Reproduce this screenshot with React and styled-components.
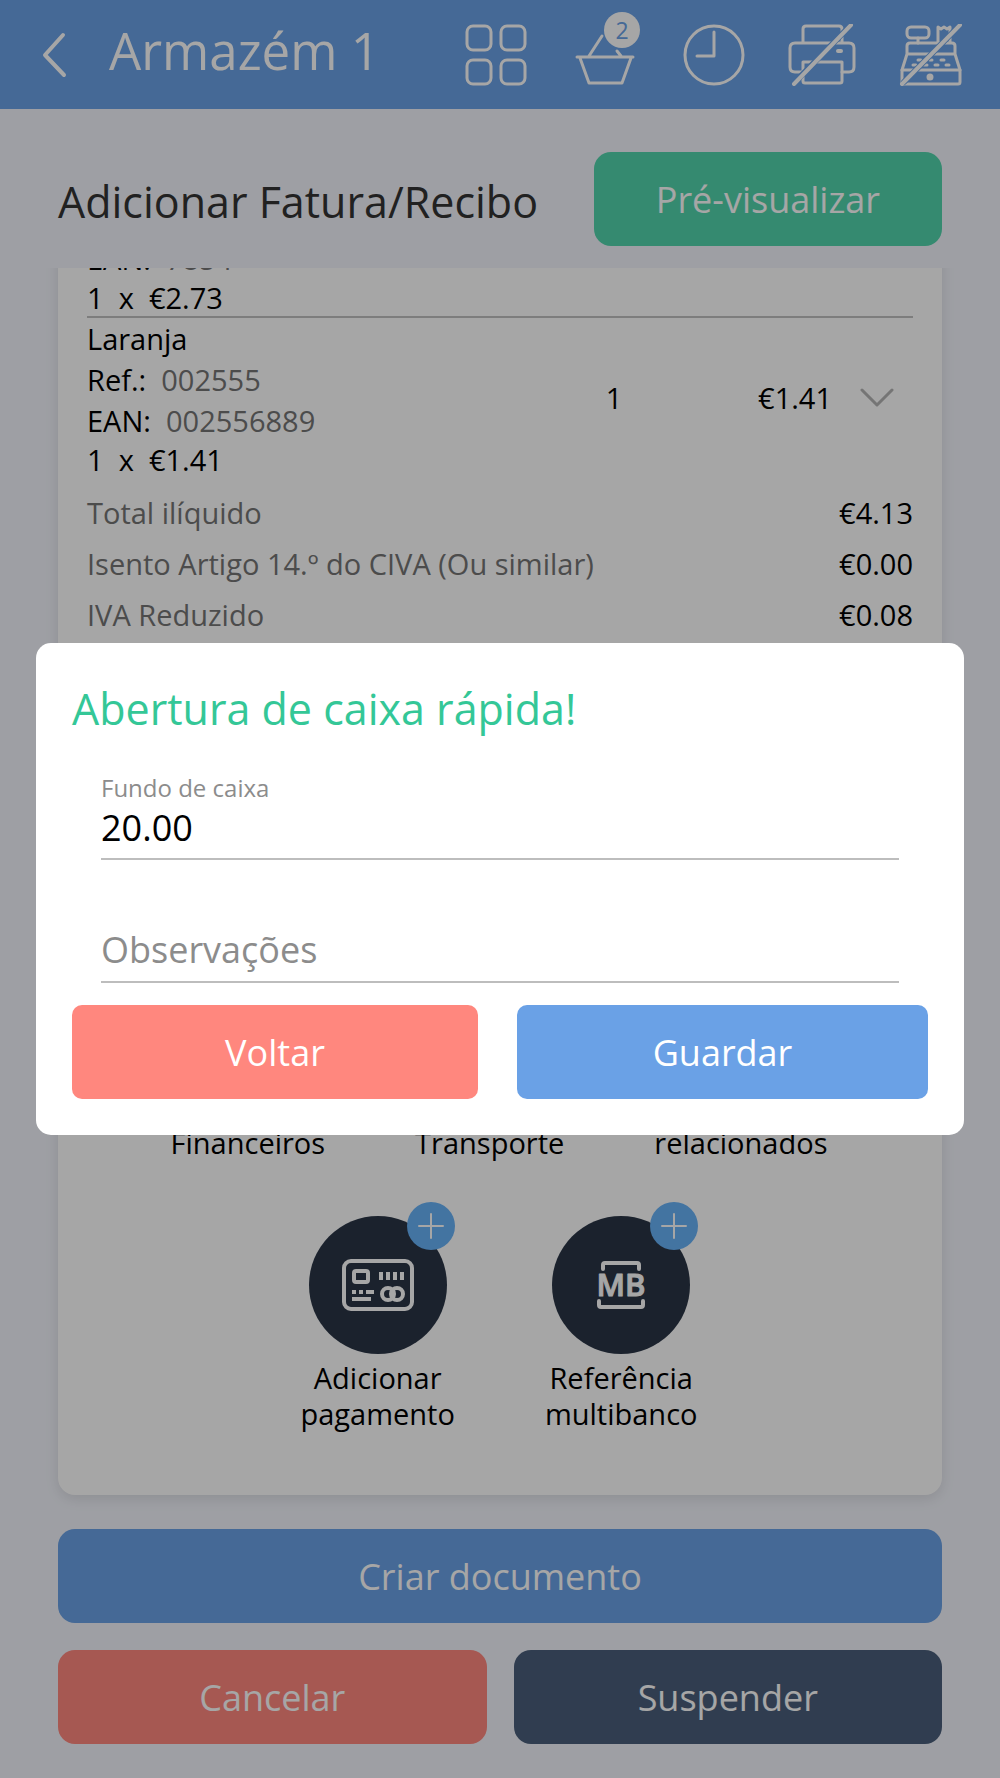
import React, { useState } from 'react'
import styled, { createGlobalStyle } from 'styled-components'

const GlobalStyle = createGlobalStyle`
    :root {
        --color-blue: #6aa1e6;
        --color-green: #52d4ac;
        --color-title-green: #34c797;
        --color-red: #ff877e;
        --color-navy: #4b5f7b;
        --color-dark: #2a3546;
        --color-plus: #67b2f8;
        --color-grey: #757575;
        --color-background: #f3f5fc;
        --color-white: #ffffff;
    }
    * {
        box-sizing: border-box;
    }
    body {
        margin: 0;
        background-color: var(--color-background);
    }
    body, button, input {
        font-family: 'Open Sans', 'Noto Sans', sans-serif;
    }
`

const Page = styled.div`
    display: flex;
    flex-direction: column;
    height: 100vh;
    color: #000;
    font-size: 29px;
    line-height: 36px;
`
const TopBar = styled.header`
    display: flex;
    align-items: center;
    height: 109px;
    padding: 0 35px;
    flex-shrink: 0;
    background-color: var(--color-blue);
`
const IconButton = styled.button`
    position: relative;
    display: flex;
    padding: 0;
    border: 0;
    background: none;
    color: var(--color-white);
    cursor: pointer;
`
const StoreName = styled.h1`
    flex: 1;
    margin: 0;
    padding: 0 0 10px 35px;
    color: var(--color-white);
    font-size: 51px;
    font-weight: 400;
    line-height: 60px;
`
const Tools = styled.nav`
    display: flex;
    gap: 41px;
`
const CartCount = styled.span`
    position: absolute;
    top: -12px;
    right: -2px;
    width: 36px;
    height: 36px;
    border-radius: 50%;
    background-color: var(--color-white);
    color: var(--color-blue);
    font-size: 23px;
    line-height: 36px;
    text-align: center;
`
const Title = styled.h2`
    margin: 0;
    color: ${({ $color }) => $color || '#333'};
    font-size: 43px;
    font-weight: 400;
    line-height: 60px;
`
const Heading = styled.div`
    display: flex;
    align-items: center;
    justify-content: space-between;
    padding: 43px 58px 22px;
    flex-shrink: 0;

    ${Title} {
        padding-top: 5px;
    }
`
const Button = styled.button`
    height: 94px;
    padding: 0 62px;
    border: 0;
    border-radius: ${({ $radius }) => $radius || '17px'};
    background-color: ${({ $color }) => `var(--color-${$color})`};
    color: var(--color-white);
    font-size: 36px;
    cursor: pointer;
`
const Scroller = styled.main`
    display: flex;
    flex-direction: column;
    justify-content: flex-end;
    flex: 1;
    min-height: 0;
    padding: 0 58px 34px;
    overflow: hidden;
`
const Card = styled.section`
    padding: 29px 29px 63px;
    border-radius: 17px;
    background-color: var(--color-white);
    box-shadow: 0 4px 14px rgba(0, 0, 0, 0.1);
`
const Item = styled.article`
    display: grid;
    grid-template-columns: 1fr 120px 158px 81px;
    align-items: center;
    border-bottom: ${({ $last }) => ($last ? '0' : '2px solid #c0c0c0')};
`
const ItemLine = styled.div`
    line-height: 41px;
    white-space: pre;
`
const ItemTotal = styled.div`
    padding-top: 1px;
    white-space: pre;
`
const Muted = styled.span`
    color: var(--color-grey);
`
const Quantity = styled.div`
    text-align: center;
`
const Price = styled.div`
    text-align: right;
`
const Expand = styled(IconButton)`
    justify-content: center;
    padding-left: 9px;
    color: #b4b4b4;
`
const Totals = styled.dl`
    margin: 9px 0 0;
`
const TotalRow = styled.div`
    display: flex;
    justify-content: space-between;
    line-height: 51px;

    dt {
        color: var(--color-grey);
    }
    dd {
        margin: 0;
    }
`
const Actions = styled.div`
    display: grid;
    row-gap: 55px;
    margin-top: 305px;
    padding-right: 2px;
`
const ActionRow = styled.div`
    display: flex;
    justify-content: center;
    gap: 90px;
`
const Action = styled.button`
    display: flex;
    flex-direction: column;
    align-items: center;
    gap: 6px;
    padding: 0;
    border: 0;
    background: none;
    color: #000;
    font-size: 29px;
    line-height: 36px;
    white-space: pre-line;
    cursor: pointer;
`
const Circle = styled.span`
    position: relative;
    display: flex;
    align-items: center;
    justify-content: center;
    width: 138px;
    height: 138px;
    border-radius: 50%;
    background-color: var(--color-dark);
    color: var(--color-white);
`
const PlusBadge = styled.span`
    position: absolute;
    top: -14px;
    right: -8px;
    display: flex;
    border-radius: 50%;
    background-color: var(--color-plus);
`
const Footer = styled.footer`
    display: grid;
    grid-template-columns: 1fr 1fr;
    gap: 27px;
    padding: 0 58px 34px;
    flex-shrink: 0;

    ${Button}:first-child {
        grid-column: 1 / -1;
    }
`
const Overlay = styled.div`
    position: fixed;
    inset: 0;
    display: flex;
    align-items: center;
    padding: 0 36px;
    background-color: rgba(0, 0, 0, 0.35);
`
const Modal = styled.form`
    flex: 1;
    padding: 36px;
    border-radius: 15px;
    background-color: var(--color-white);
`
const Fields = styled.div`
    display: grid;
    row-gap: 2px;
    padding: 0 29px;
`
const FieldBox = styled.div`
    position: relative;
    padding-top: 64px;
`
// the label sits over the empty input and moves up once there is a value
const Label = styled.label`
    position: absolute;
    left: 0;
    top: ${({ $raised }) => ($raised ? '34px' : '64px')};
    color: #8c8c8c;
    font-size: ${({ $raised }) => ($raised ? '24px' : '36px')};
    line-height: ${({ $raised }) => ($raised ? '30px' : '48px')};
    pointer-events: none;
`
const Input = styled.input`
    display: block;
    width: 100%;
    height: 57px;
    padding: 0 0 7px;
    border: 0;
    border-bottom: 2px solid #bdbdbd;
    border-radius: 0;
    outline: 0;
    background: none;
    color: #000;
    font-size: 36px;
`
const ModalButtons = styled.div`
    display: grid;
    grid-template-columns: 81fr 82fr;
    gap: 39px;
    margin-top: 22px;
`

const Icon = ({ w, h, stroke = 3, children }) => (
    <svg
        width={w}
        height={h}
        viewBox={`0 0 ${w} ${h}`}
        fill="none"
        stroke="currentColor"
        strokeWidth={stroke}
        strokeLinecap="round"
        strokeLinejoin="round"
        aria-hidden="true"
    >
        {children}
    </svg>
)

const BackIcon = () => (
    <Icon w={39} h={62} stroke={4}>
        <path d="M28 11L10 31l19 20" />
    </Icon>
)
const GridIcon = () => (
    <Icon w={68} h={62}>
        <rect x="6" y="2" width="24" height="24" rx="6" />
        <rect x="40" y="2" width="24" height="24" rx="6" />
        <rect x="6" y="36" width="24" height="24" rx="6" />
        <rect x="40" y="36" width="24" height="24" rx="6" />
    </Icon>
)
const BasketIcon = () => (
    <Icon w={68} h={62}>
        <path d="M7 33h56M10 34l9 25h33l9-25M19 32l13-20M47 27l4 5" />
    </Icon>
)
const ClockIcon = () => (
    <Icon w={68} h={62}>
        <circle cx="35" cy="31" r="29" />
        <path d="M35 8v24H18" />
    </Icon>
)
const PrinterIcon = () => (
    <Icon w={68} h={62}>
        <path d="M15 18V5q0-3 3-3h33q3 0 3 3v13" />
        <path d="M14 48H7q-5 0-5-5V24q0-5 5-5h54q5 0 5 5v19q0 5-5 5h-7" />
        <path d="M15 38h39v19q0 2-2 2H17q-2 0-2-2z" />
        <path d="M50 27h3" strokeWidth="4" />
        <path d="M61 3L8 57" stroke="var(--color-blue)" strokeWidth="6" />
        <path d="M63 1L6 60" strokeWidth="4" />
    </Icon>
)
const RegisterIcon = () => (
    <Icon w={68} h={62}>
        <rect x="10" y="3" width="22" height="11" rx="4" />
        <path d="M21 14v5M41 18V3l3 2 3-2 3 2 3-2v15" />
        <path d="M10 30V22q0-3 3-3h42q3 0 3 3v8M10 30h48M10 30L5 46M58 30l5 16" />
        <path d="M5 46h58v12q0 2-2 2H7q-2 0-2-2z" />
        <path d="M21 36h3M33 36h2M44 36h3M16 41h3M27 41h3M38 41h3M49 41h3" />
        <circle cx="33" cy="53" r="2" fill="currentColor" />
        <path d="M61 3L7 58" stroke="var(--color-blue)" strokeWidth="6" />
        <path d="M63 1L5 60" strokeWidth="4" />
    </Icon>
)
const ChevronIcon = () => (
    <Icon w={34} h={20}>
        <path d="M2 2l15 15L32 2" />
    </Icon>
)
const PlusIcon = () => (
    <Icon w={48} h={48} stroke={2}>
        <path d="M24 12v24M12 24h24" />
    </Icon>
)
const CardIcon = () => (
    <Icon w={74} h={54} stroke={4}>
        <rect x="3" y="3" width="68" height="48" rx="7" />
        <rect x="13" y="13" width="14" height="11" rx="2" />
        <g strokeLinecap="butt">
            <path d="M40 14v8M47 14v8M54 14v8M61 14v8" />
            <path d="M11 34h4M18 34h4M25 34h8M11 41h19" />
        </g>
        <circle cx="47" cy="36" r="6" />
        <circle cx="56" cy="36" r="6" />
    </Icon>
)
const MultibancoIcon = () => (
    <Icon w={50} h={50} stroke={4}>
        <path d="M7 9V5q0-2 2-2h32q2 0 2 2v4M3 41v4q0 2 2 2h40q2 0 2-2v-4" />
        <text
            x="25"
            y="36"
            textAnchor="middle"
            fill="currentColor"
            strokeWidth="1"
            fontSize="31"
            fontWeight="600"
        >
            MB
        </text>
    </Icon>
)

const items = [
    { name: 'Maçã', code: '001', ean: '7854', price: '€2.73' },
    { name: 'Laranja', code: '002555', ean: '002556889', price: '€1.41' },
]
const totals = [
    ['Total ilíquido', '€4.13'],
    ['Isento Artigo 14.º do CIVA (Ou similar)', '€0.00'],
    ['IVA Reduzido', '€0.08'],
]
const actions = [
    [
        { label: 'Dados\nFinanceiros', icon: <CardIcon /> },
        { label: 'Dados\nTransporte', icon: <CardIcon /> },
        { label: 'Docs.\nrelacionados', icon: <CardIcon /> },
    ],
    [
        { label: 'Adicionar\npagamento', icon: <CardIcon /> },
        { label: 'Referência\nmultibanco', icon: <MultibancoIcon /> },
    ],
]

const Field = ({ id, label, initial = '' }) => {
    const [value, setValue] = useState(initial)
    const [focused, setFocused] = useState(false)

    return (
        <FieldBox>
            <Label htmlFor={id} $raised={focused || value !== ''}>
                {label}
            </Label>
            <Input
                id={id}
                value={value}
                onChange={(e) => setValue(e.target.value)}
                onFocus={() => setFocused(true)}
                onBlur={() => setFocused(false)}
            />
        </FieldBox>
    )
}

const App = () => (
    <>
        <GlobalStyle />
        <Page>
            <TopBar>
                <IconButton aria-label="Voltar atrás">
                    <BackIcon />
                </IconButton>
                <StoreName>Armazém 1</StoreName>
                <Tools>
                    <IconButton aria-label="Menu">
                        <GridIcon />
                    </IconButton>
                    <IconButton aria-label="Carrinho">
                        <BasketIcon />
                        <CartCount>2</CartCount>
                    </IconButton>
                    <IconButton aria-label="Histórico">
                        <ClockIcon />
                    </IconButton>
                    <IconButton aria-label="Impressora">
                        <PrinterIcon />
                    </IconButton>
                    <IconButton aria-label="Caixa">
                        <RegisterIcon />
                    </IconButton>
                </Tools>
            </TopBar>
            <Heading>
                <Title>Adicionar Fatura/Recibo</Title>
                <Button $color="green">Pré-visualizar</Button>
            </Heading>
            <Scroller>
                <Card>
                    {items.map((item, i) => (
                        <Item key={item.name} $last={i === items.length - 1}>
                            <div>
                                <ItemLine>{item.name}</ItemLine>
                                <ItemLine>
                                    {'Ref.:  '}
                                    <Muted>{item.code}</Muted>
                                </ItemLine>
                                <ItemLine>
                                    {'EAN:  '}
                                    <Muted>{item.ean}</Muted>
                                </ItemLine>
                                <ItemTotal>{`1  x  ${item.price}`}</ItemTotal>
                            </div>
                            <Quantity>1</Quantity>
                            <Price>{item.price}</Price>
                            <Expand aria-label="Expandir">
                                <ChevronIcon />
                            </Expand>
                        </Item>
                    ))}
                    <Totals>
                        {totals.map(([label, value]) => (
                            <TotalRow key={label}>
                                <dt>{label}</dt>
                                <dd>{value}</dd>
                            </TotalRow>
                        ))}
                    </Totals>
                    <Actions>
                        {actions.map((row, i) => (
                            <ActionRow key={i}>
                                {row.map(({ label, icon }) => (
                                    <Action key={label}>
                                        <Circle>
                                            {icon}
                                            <PlusBadge>
                                                <PlusIcon />
                                            </PlusBadge>
                                        </Circle>
                                        {label}
                                    </Action>
                                ))}
                            </ActionRow>
                        ))}
                    </Actions>
                </Card>
            </Scroller>
            <Footer>
                <Button $color="blue">Criar documento</Button>
                <Button $color="red">Cancelar</Button>
                <Button $color="navy">Suspender</Button>
            </Footer>
        </Page>
        <Overlay>
            <Modal
                role="dialog"
                aria-labelledby="modal-title"
                onSubmit={(e) => e.preventDefault()}
            >
                <Title id="modal-title" $color="var(--color-title-green)">
                    Abertura de caixa rápida!
                </Title>
                <Fields>
                    <Field id="fund" label="Fundo de caixa" initial="20.00" />
                    <Field id="notes" label="Observações" />
                </Fields>
                <ModalButtons>
                    <Button type="button" $color="red" $radius="10px">
                        Voltar
                    </Button>
                    <Button type="submit" $color="blue" $radius="10px">
                        Guardar
                    </Button>
                </ModalButtons>
            </Modal>
        </Overlay>
    </>
)

export default App
